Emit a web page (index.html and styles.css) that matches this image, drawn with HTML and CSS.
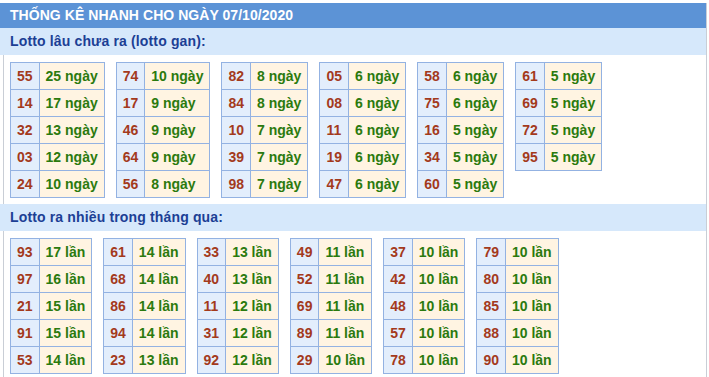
FILE: index.html
```html
<!DOCTYPE html>
<html lang="vi">
<head>
<meta charset="utf-8">
<title>Thống kê nhanh</title>
<link rel="stylesheet" href="styles.css">
</head>
<body>
<div class="wrap">
  <div class="title">THỐNG KÊ NHANH CHO NGÀY 07/10/2020</div>
  <div class="sub">Lotto lâu chưa ra (lotto gan):</div>
  <div class="group">
    <table class="t"><tr><td class="n">55</td><td class="v">25 ngày</td></tr><tr><td class="n">14</td><td class="v">17 ngày</td></tr><tr><td class="n">32</td><td class="v">13 ngày</td></tr><tr><td class="n">03</td><td class="v">12 ngày</td></tr><tr><td class="n">24</td><td class="v">10 ngày</td></tr></table>
    <table class="t"><tr><td class="n">74</td><td class="v">10 ngày</td></tr><tr><td class="n">17</td><td class="v">9 ngày</td></tr><tr><td class="n">46</td><td class="v">9 ngày</td></tr><tr><td class="n">64</td><td class="v">9 ngày</td></tr><tr><td class="n">56</td><td class="v">8 ngày</td></tr></table>
    <table class="t"><tr><td class="n">82</td><td class="v">8 ngày</td></tr><tr><td class="n">84</td><td class="v">8 ngày</td></tr><tr><td class="n">10</td><td class="v">7 ngày</td></tr><tr><td class="n">39</td><td class="v">7 ngày</td></tr><tr><td class="n">98</td><td class="v">7 ngày</td></tr></table>
    <table class="t"><tr><td class="n">05</td><td class="v">6 ngày</td></tr><tr><td class="n">08</td><td class="v">6 ngày</td></tr><tr><td class="n">11</td><td class="v">6 ngày</td></tr><tr><td class="n">19</td><td class="v">6 ngày</td></tr><tr><td class="n">47</td><td class="v">6 ngày</td></tr></table>
    <table class="t"><tr><td class="n">58</td><td class="v">6 ngày</td></tr><tr><td class="n">75</td><td class="v">6 ngày</td></tr><tr><td class="n">16</td><td class="v">5 ngày</td></tr><tr><td class="n">34</td><td class="v">5 ngày</td></tr><tr><td class="n">60</td><td class="v">5 ngày</td></tr></table>
    <table class="t"><tr><td class="n">61</td><td class="v">5 ngày</td></tr><tr><td class="n">69</td><td class="v">5 ngày</td></tr><tr><td class="n">72</td><td class="v">5 ngày</td></tr><tr><td class="n">95</td><td class="v">5 ngày</td></tr></table>
  </div>
  <div class="sub">Lotto ra nhiều trong tháng qua:</div>
  <div class="group">
    <table class="t"><tr><td class="n">93</td><td class="v">17 lần</td></tr><tr><td class="n">97</td><td class="v">16 lần</td></tr><tr><td class="n">21</td><td class="v">15 lần</td></tr><tr><td class="n">91</td><td class="v">15 lần</td></tr><tr><td class="n">53</td><td class="v">14 lần</td></tr></table>
    <table class="t"><tr><td class="n">61</td><td class="v">14 lần</td></tr><tr><td class="n">68</td><td class="v">14 lần</td></tr><tr><td class="n">86</td><td class="v">14 lần</td></tr><tr><td class="n">94</td><td class="v">14 lần</td></tr><tr><td class="n">23</td><td class="v">13 lần</td></tr></table>
    <table class="t"><tr><td class="n">33</td><td class="v">13 lần</td></tr><tr><td class="n">40</td><td class="v">13 lần</td></tr><tr><td class="n">11</td><td class="v">12 lần</td></tr><tr><td class="n">31</td><td class="v">12 lần</td></tr><tr><td class="n">92</td><td class="v">12 lần</td></tr></table>
    <table class="t"><tr><td class="n">49</td><td class="v">11 lần</td></tr><tr><td class="n">52</td><td class="v">11 lần</td></tr><tr><td class="n">69</td><td class="v">11 lần</td></tr><tr><td class="n">89</td><td class="v">11 lần</td></tr><tr><td class="n">29</td><td class="v">10 lần</td></tr></table>
    <table class="t"><tr><td class="n">37</td><td class="v">10 lần</td></tr><tr><td class="n">42</td><td class="v">10 lần</td></tr><tr><td class="n">48</td><td class="v">10 lần</td></tr><tr><td class="n">57</td><td class="v">10 lần</td></tr><tr><td class="n">78</td><td class="v">10 lần</td></tr></table>
    <table class="t"><tr><td class="n">79</td><td class="v">10 lần</td></tr><tr><td class="n">80</td><td class="v">10 lần</td></tr><tr><td class="n">85</td><td class="v">10 lần</td></tr><tr><td class="n">88</td><td class="v">10 lần</td></tr><tr><td class="n">90</td><td class="v">10 lần</td></tr></table>
  </div>
</div>
</body>
</html>
```
FILE: styles.css
```css
html, body {
  margin: 0;
  padding: 0;
  background: #ffffff;
}
body {
  padding-top: 3px;
  font-family: "Liberation Sans", Arial, sans-serif;
  font-size: 14px;
  font-weight: bold;
}
.wrap {
  width: 707px;
  border-right: 1px solid #c9ced6;
  box-sizing: border-box;
}
.title {
  height: 25px;
  line-height: 25px;
  background: #5c93d6;
  color: #ffffff;
  padding-left: 10px;
  letter-spacing: 0.05px;
}
.sub {
  height: 27px;
  line-height: 27px;
  background: #d6e8fb;
  color: #1c3f95;
  padding-left: 10px;
  letter-spacing: 0.15px;
}
.group {
  display: flex;
  align-items: flex-start;
  gap: 11px;
  margin-left: 3px;
  border-left: 1px solid #c9ced6;
  padding: 7px 0 6px 6px;
}
.t {
  border-collapse: collapse;
}
.t td {
  height: 26px;
  padding: 0 6px;
  border: 1px solid #93b2e2;
  white-space: nowrap;
}
.n {
  background: #e3eefc;
  color: #a33a1c;
}
.v {
  background: #fff4e2;
  color: #2b7a0e;
}
```
